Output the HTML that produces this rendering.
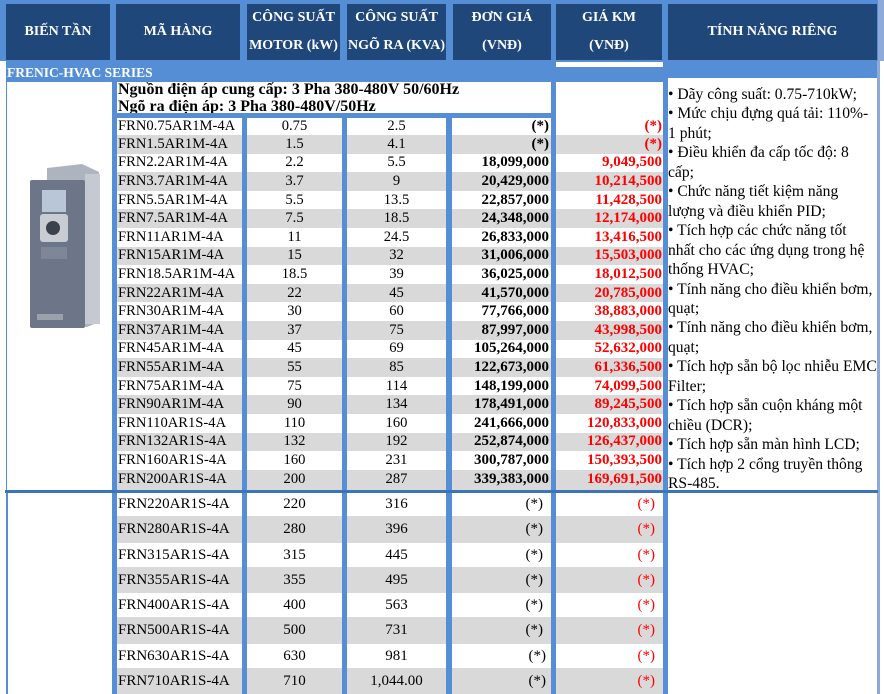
<!DOCTYPE html>
<html><head><meta charset="utf-8">
<style>
*{margin:0;padding:0;box-sizing:border-box}
body{width:884px;height:694px;overflow:hidden;background:#fff;position:relative;font-family:"Liberation Serif",serif;color:#000}
.a{position:absolute}
.bg{left:0;top:0;width:878px;height:694px;background:#558ed5}
.h{background:#1f477a;color:#fff;font-weight:bold;font-size:14px;text-align:center;display:flex;flex-direction:column;justify-content:space-around;top:4px;height:56px;line-height:18px}
.r{position:absolute;left:0;width:884px}
.r div{position:absolute;top:0;height:100%;font-size:14.6px;white-space:nowrap;display:flex;align-items:center}
.c2{left:117px;width:125px;padding-left:1px}
.c3{left:247px;width:95px;justify-content:center}
.c4{left:347px;width:99px;justify-content:center}
.r .c5{left:452px;width:99px;justify-content:flex-end;padding-right:2px;font-weight:bold;font-size:15px}
.r .c6{left:556px;width:107px;justify-content:flex-end;padding-right:1px;font-weight:bold;color:#f00;font-size:15px}
.w div{background:#fff}
.g div{background:#d9d9d9}
.lo div{font-size:15px}
.r.lo .c5,.r.lo .c6{font-weight:normal;padding-right:8px;font-size:15px}
.f{left:668px;top:82px;width:209px;height:408px;background:#fff;font-size:15.6px;line-height:19.45px;padding:3px 0 0 0;overflow:hidden;white-space:nowrap}
</style></head><body>
<div class="a bg"></div>
<div class="a" style="left:0;top:61px;width:6px;height:633px;background:#fff"></div>
<div class="a" style="left:878px;top:61px;width:6px;height:633px;background:#fff"></div>
<div class="a" style="left:878px;top:0;width:6px;height:61px;background:#8eaadb"></div>
<div class="a" style="left:877px;top:61px;width:3px;height:633px;background:#8eaadb"></div>

<div class="a h" style="left:6px;width:104px">BIẾN TẦN</div>
<div class="a h" style="left:116px;width:124px">MÃ HÀNG</div>
<div class="a h" style="left:247px;width:93px"><span>CÔNG SUẤT</span><span>MOTOR (kW)</span></div>
<div class="a h" style="left:347px;width:99px"><span>CÔNG SUẤT</span><span>NGÕ RA (KVA)</span></div>
<div class="a h" style="left:453px;width:98px"><span>ĐƠN GIÁ</span><span>(VNĐ)</span></div>
<div class="a h" style="left:556px;width:106px"><span>GIÁ KM</span><span>(VNĐ)</span></div>
<div class="a h" style="left:668px;width:209px">TÍNH NĂNG RIÊNG</div>

<div class="a" style="left:556px;top:62px;width:107px;height:5px;background:#fff"></div>
<div class="a" style="left:7px;top:61px;width:200px;height:19px;overflow:hidden;color:#fff;font-weight:bold;font-size:13.5px;line-height:24px">FRENIC-HVAC SERIES</div>

<div class="a" style="left:7px;top:82px;width:105px;height:408px;background:#fff">
<svg width="105" height="408" viewBox="0 0 105 408">
<polygon points="40,86 75,82 92,90 92,240 80,245 40,245" fill="#aeb4bf"/>
<rect x="78" y="92" width="15" height="150" fill="#c5cad2"/>
<rect x="23" y="98" width="55" height="148" rx="2" fill="#6d7688"/>
<rect x="35" y="108" width="24" height="22" fill="#b9c6d8"/>
<rect x="33" y="132" width="28" height="28" rx="3" fill="#c9ccd3"/>
<circle cx="46" cy="146" r="7" fill="#3b414d"/>
<rect x="34" y="165" width="26" height="12" fill="#7e8698"/>
<rect x="30" y="232" width="26" height="6" fill="#9aa1ad"/>
</svg></div>

<div class="a" style="left:117px;top:82px;width:434px;height:31px;background:#fff;font-size:16px;font-weight:bold;line-height:16.5px;padding-left:1px;white-space:nowrap;overflow:hidden">Nguồn điện áp cung cấp: 3 Pha 380-480V 50/60Hz<br>Ngõ ra điện áp: 3 Pha 380-480V/50Hz</div>
<div class="a" style="left:556px;top:82px;width:107px;height:36px;background:#fff"></div>

<div class="r w" style="top:118px;height:17px"><div class="c2">FRN0.75AR1M-4A</div><div class="c3">0.75</div><div class="c4">2.5</div><div class="c5">(*)</div><div class="c6">(*)</div></div>
<div class="r g" style="top:135px;height:18.6px"><div class="c2">FRN1.5AR1M-4A</div><div class="c3">1.5</div><div class="c4">4.1</div><div class="c5">(*)</div><div class="c6">(*)</div></div>
<div class="r w" style="top:153.6px;height:18.6px"><div class="c2">FRN2.2AR1M-4A</div><div class="c3">2.2</div><div class="c4">5.5</div><div class="c5">18,099,000</div><div class="c6">9,049,500</div></div>
<div class="r g" style="top:172.2px;height:18.6px"><div class="c2">FRN3.7AR1M-4A</div><div class="c3">3.7</div><div class="c4">9</div><div class="c5">20,429,000</div><div class="c6">10,214,500</div></div>
<div class="r w" style="top:190.8px;height:18.6px"><div class="c2">FRN5.5AR1M-4A</div><div class="c3">5.5</div><div class="c4">13.5</div><div class="c5">22,857,000</div><div class="c6">11,428,500</div></div>
<div class="r g" style="top:209.4px;height:18.6px"><div class="c2">FRN7.5AR1M-4A</div><div class="c3">7.5</div><div class="c4">18.5</div><div class="c5">24,348,000</div><div class="c6">12,174,000</div></div>
<div class="r w" style="top:228px;height:18.6px"><div class="c2">FRN11AR1M-4A</div><div class="c3">11</div><div class="c4">24.5</div><div class="c5">26,833,000</div><div class="c6">13,416,500</div></div>
<div class="r g" style="top:246.6px;height:18.6px"><div class="c2">FRN15AR1M-4A</div><div class="c3">15</div><div class="c4">32</div><div class="c5">31,006,000</div><div class="c6">15,503,000</div></div>
<div class="r w" style="top:265.2px;height:18.6px"><div class="c2" style="z-index:2;overflow:visible">FRN18.5AR1M-4A</div><div class="c3">18.5</div><div class="c4">39</div><div class="c5">36,025,000</div><div class="c6">18,012,500</div></div>
<div class="r g" style="top:283.8px;height:18.6px"><div class="c2">FRN22AR1M-4A</div><div class="c3">22</div><div class="c4">45</div><div class="c5">41,570,000</div><div class="c6">20,785,000</div></div>
<div class="r w" style="top:302.4px;height:18.6px"><div class="c2">FRN30AR1M-4A</div><div class="c3">30</div><div class="c4">60</div><div class="c5">77,766,000</div><div class="c6">38,883,000</div></div>
<div class="r g" style="top:321px;height:18.6px"><div class="c2">FRN37AR1M-4A</div><div class="c3">37</div><div class="c4">75</div><div class="c5">87,997,000</div><div class="c6">43,998,500</div></div>
<div class="r w" style="top:339.6px;height:18.6px"><div class="c2">FRN45AR1M-4A</div><div class="c3">45</div><div class="c4">69</div><div class="c5">105,264,000</div><div class="c6">52,632,000</div></div>
<div class="r g" style="top:358.2px;height:18.6px"><div class="c2">FRN55AR1M-4A</div><div class="c3">55</div><div class="c4">85</div><div class="c5">122,673,000</div><div class="c6">61,336,500</div></div>
<div class="r w" style="top:376.8px;height:18.6px"><div class="c2">FRN75AR1M-4A</div><div class="c3">75</div><div class="c4">114</div><div class="c5">148,199,000</div><div class="c6">74,099,500</div></div>
<div class="r g" style="top:395.4px;height:18.6px"><div class="c2">FRN90AR1M-4A</div><div class="c3">90</div><div class="c4">134</div><div class="c5">178,491,000</div><div class="c6">89,245,500</div></div>
<div class="r w" style="top:414px;height:18.6px"><div class="c2">FRN110AR1S-4A</div><div class="c3">110</div><div class="c4">160</div><div class="c5">241,666,000</div><div class="c6">120,833,000</div></div>
<div class="r g" style="top:432.6px;height:18.6px"><div class="c2">FRN132AR1S-4A</div><div class="c3">132</div><div class="c4">192</div><div class="c5">252,874,000</div><div class="c6">126,437,000</div></div>
<div class="r w" style="top:451.2px;height:18.6px"><div class="c2">FRN160AR1S-4A</div><div class="c3">160</div><div class="c4">231</div><div class="c5">300,787,000</div><div class="c6">150,393,500</div></div>
<div class="r g" style="top:469.8px;height:20.2px"><div class="c2">FRN200AR1S-4A</div><div class="c3">200</div><div class="c4">287</div><div class="c5">339,383,000</div><div class="c6">169,691,500</div></div>

<div class="a f">• Dãy công suất: 0.75-710kW;<br>• Mức chịu đựng quá tải: 110%-<br>1 phút;<br>• Điều khiển đa cấp tốc độ: 8<br>cấp;<br>• Chức năng tiết kiệm năng<br>lượng và điều khiển PID;<br>• Tích hợp các chức năng tốt<br>nhất cho các ứng dụng trong hệ<br>thống HVAC;<br>• Tính năng cho điều khiển bơm,<br>quạt;<br>• Tính năng cho điều khiển bơm,<br>quạt;<br>• Tích hợp sẵn bộ lọc nhiễu EMC<br>Filter;<br>• Tích hợp sẵn cuộn kháng một<br>chiều (DCR);<br>• Tích hợp sẵn màn hình LCD;<br>• Tích hợp 2 cổng truyền thông<br>RS-485.</div>
<div class="a" style="left:668px;top:78px;width:209px;height:4px;background:#fff"></div>

<div class="a" style="left:5px;top:490px;width:873px;height:3px;background:#3a75b8"></div>
<div class="a" style="left:8px;top:493px;width:104px;height:201px;background:#fff"></div>
<div class="a" style="left:668px;top:493px;width:209px;height:201px;background:#fff"></div>

<div class="r w lo" style="top:493px;height:23px"><div class="c2">FRN220AR1S-4A</div><div class="c3">220</div><div class="c4">316</div><div class="c5">(*)</div><div class="c6">(*)</div></div>
<div class="r g lo" style="top:516px;height:27px"><div class="c2">FRN280AR1S-4A</div><div class="c3">280</div><div class="c4">396</div><div class="c5">(*)</div><div class="c6">(*)</div></div>
<div class="r w lo" style="top:543px;height:24px"><div class="c2">FRN315AR1S-4A</div><div class="c3">315</div><div class="c4">445</div><div class="c5">(*)</div><div class="c6">(*)</div></div>
<div class="r g lo" style="top:567px;height:26px"><div class="c2">FRN355AR1S-4A</div><div class="c3">355</div><div class="c4">495</div><div class="c5">(*)</div><div class="c6">(*)</div></div>
<div class="r w lo" style="top:593px;height:24px"><div class="c2">FRN400AR1S-4A</div><div class="c3">400</div><div class="c4">563</div><div class="c5">(*)</div><div class="c6">(*)</div></div>
<div class="r g lo" style="top:617px;height:27px"><div class="c2">FRN500AR1S-4A</div><div class="c3">500</div><div class="c4">731</div><div class="c5">(*)</div><div class="c6">(*)</div></div>
<div class="r w lo" style="top:644px;height:24px"><div class="c2">FRN630AR1S-4A</div><div class="c3">630</div><div class="c4">981</div><div class="c5" style="padding-right:5px">(*)</div><div class="c6">(*)</div></div>
<div class="r g lo" style="top:668px;height:26px"><div class="c2">FRN710AR1S-4A</div><div class="c3">710</div><div class="c4">1,044.00</div><div class="c5" style="padding-right:5px">(*)</div><div class="c6">(*)</div></div>
</body></html>
